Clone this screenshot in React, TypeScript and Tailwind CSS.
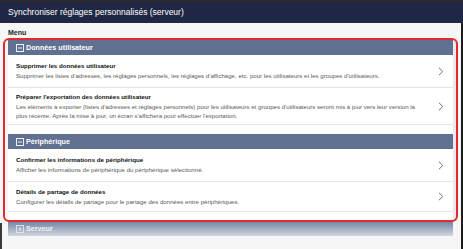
import React from "react";

type Item = { title: string; desc: React.ReactNode; h: string };

function Chevron() {
  return (
    <svg width="6" height="9" viewBox="0 0 6 9" className="shrink-0">
      <polyline points="1,0.8 4.8,4.5 1,8.2" fill="none" stroke="#707070" strokeWidth="1" />
    </svg>
  );
}

function BoxIcon({ plus, light }: { plus?: boolean; light?: boolean }) {
  const c = light ? "#e4e8ef" : "#ffffff";
  return (
    <svg width="8" height="8" viewBox="0 0 8 8" className="shrink-0">
      <rect x="0.5" y="0.5" width="7" height="7" fill="none" stroke={c} strokeWidth="0.9" />
      <line x1="2" y1="4" x2="6" y2="4" stroke={c} strokeWidth="0.9" />
      {plus && <line x1="4" y1="2" x2="4" y2="6" stroke={c} strokeWidth="0.9" />}
    </svg>
  );
}

function SectionHeader({ label }: { label: string }) {
  return (
    <div className="flex h-[15px] items-center gap-[2px] bg-[#5f7090] pl-[8px] text-[7.2px] font-bold leading-none text-white">
      <BoxIcon />
      <span>{label}</span>
    </div>
  );
}

function Row({ item }: { item: Item }) {
  return (
    <div className={`flex items-center border-b border-[#e4e4e4] bg-white pl-[8px] pr-[9px] ${item.h}`}>
      <div className="flex-1">
        <div className="text-[6.2px] font-bold leading-[10px] text-[#111]">{item.title}</div>
        <div className="mt-[1px] text-[6.1px] leading-[8.5px] text-[#5a5a5a]">{item.desc}</div>
      </div>
      <Chevron />
    </div>
  );
}

const userItems: Item[] = [
  {
    title: "Supprimer les données utilisateur",
    desc: "Supprimer les listes d'adresses, les réglages personnels, les réglages d'affichage, etc. pour les utilisateurs et les groupes d'utilisateurs.",
    h: "h-[33px]",
  },
  {
    title: "Préparer l'exportation des données utilisateur",
    desc: (
      <>
        Les éléments à exporter (listes d'adresses et réglages personnels) pour les utilisateurs et groupes d'utilisateurs seront mis à jour vers leur version la
        <br />
        plus récente. Après la mise à jour, un écran s'affichera pour effectuer l'exportation.
      </>
    ),
    h: "h-[37px]",
  },
];

const deviceItems: Item[] = [
  {
    title: "Confirmer les informations de périphérique",
    desc: "Afficher les informations de périphérique du périphérique sélectionné.",
    h: "h-[33px]",
  },
  {
    title: "Détails de partage de données",
    desc: "Configurer les détails de partage pour le partage des données entre périphériques.",
    h: "h-[30px]",
  },
];

export default function App() {
  return (
    <div className="relative h-[249px] w-[463px] overflow-hidden bg-[#f6f6f6] font-['Liberation_Sans',Arial,sans-serif]">
      <header className="flex h-[23px] items-center border-t-2 border-[#2b2b2e] bg-[#1f2744] pl-[8px] text-[8.5px] text-white">
        Synchroniser réglages personnalisés (serveur)
      </header>

      <div className="flex h-[226px]">
        <div className="flex w-[8px] flex-col justify-end">
          <div className="h-[26px] w-[2px] bg-[#3a3a3a]" />
        </div>

        <div className="flex w-[445px] flex-col">
          <div className="h-[17px] pt-[5px] text-[7px] font-bold leading-[10px] text-[#222]">Menu</div>

          <SectionHeader label="Données utilisateur" />
          {userItems.map((it) => (
            <Row key={it.title} item={it} />
          ))}
          <div className="h-[9px] bg-white" />

          <SectionHeader label="Périphérique" />
          {deviceItems.map((it) => (
            <Row key={it.title} item={it} />
          ))}
          <div className="h-[10px] bg-white" />

          <div className="flex h-[14px] items-center gap-[2px] bg-gradient-to-b from-[#7686a3] to-[#d3d8e2] pl-[8px] text-[7.2px] font-bold leading-none text-[#eef1f6]">
            <BoxIcon plus light />
            <span>Serveur</span>
          </div>
        </div>

        <div className="flex w-[4px] flex-col">
          <div className="h-[16px]" />
          <div className="h-[182px] bg-[#ebebeb]" />
        </div>

        <div className="flex-1" />
        <div className="w-[2px] bg-[#1c1c1e]" />
      </div>

      <div className="pointer-events-none absolute left-[3px] top-[38px] h-[184px] w-[455px] rounded-[6px] border-2 border-[#e42a2e]" />
    </div>
  );
}
